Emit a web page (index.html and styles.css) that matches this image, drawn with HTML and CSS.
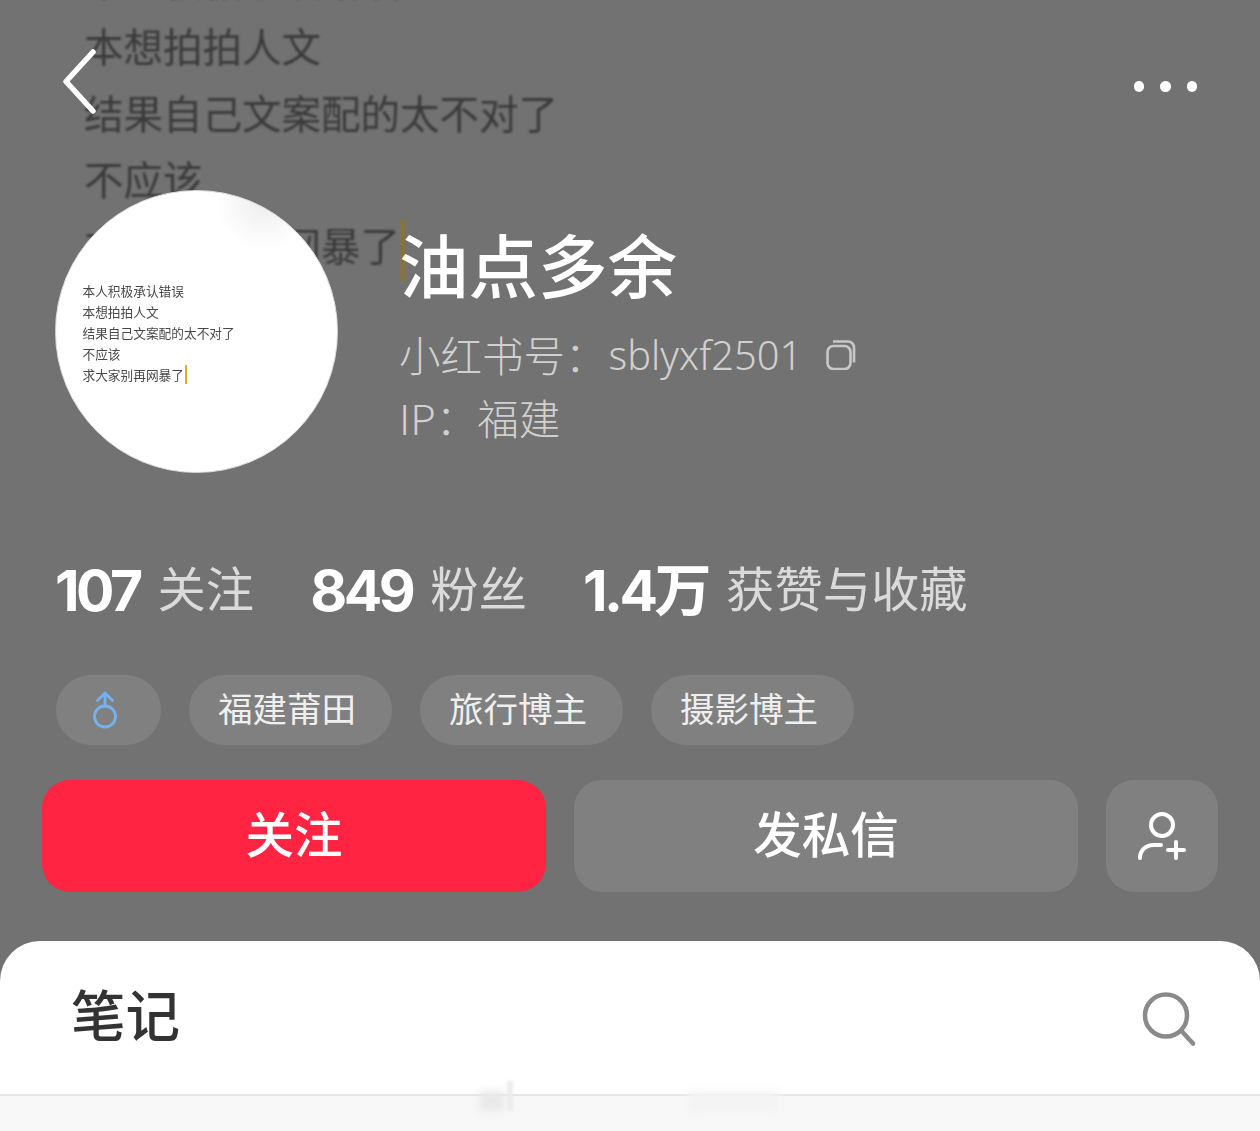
FILE: index.html
```html
<!DOCTYPE html>
<html lang="zh-cmn-Hans">
<head>
    <meta charset="UTF-8">
    <meta name="viewport" content="width=device-width, initial-scale=1.0">
    <title>油点多余</title>
    <link rel="stylesheet" href="styles.css">
</head>
<body>
<div class="page">
    <!-- 背景图：头像放大后的文字 -->
    <div class="backdrop">
        <p>本人积极承认错误</p>
        <p>本想拍拍人文</p>
        <p>结果自己文案配的太不对了</p>
        <p>不应该</p>
        <p>求大家别再网暴了<i class="caret"></i></p>
    </div>

    <div class="top">
        <svg class="back" width="36" height="66" viewBox="0 0 36 66"><path d="M31 3 L4 32.500 L31 62" fill="none" stroke="#fff" stroke-width="5.500" stroke-linecap="round" stroke-linejoin="round"/></svg>
        <div class="dots"><span></span><span></span><span></span></div>
    </div>

    <div class="profile">
        <div class="avatar">
            <p>本人积极承认错误</p>
            <p>本想拍拍人文</p>
            <p>结果自己文案配的太不对了</p>
            <p>不应该</p>
            <p>求大家别再网暴了<i class="caret"></i></p>
        </div>
        <div class="info">
            <h1>油点多余</h1>
            <div class="line">小红书号：<span class="rid">sblyxf2501</span>
                <svg class="copy" width="30" height="30" viewBox="0 0 30 30" fill="none" stroke="#c8c8c8" stroke-width="2.600"><rect x="1.500" y="6" width="23" height="23" rx="6"/><path d="M7 1.500h15a6 6 0 0 1 6 6v15"/></svg>
            </div>
            <div class="line">IP：<span class="place">福建</span></div>
        </div>
    </div>

    <div class="stats">
        <div class="stat"><b>107</b><span>关注</span></div>
        <div class="stat"><b>849</b><span>粉丝</span></div>
        <div class="stat"><b>1.4万</b><span>获赞与收藏</span></div>
    </div>

    <div class="tags">
        <div class="tag tag-sex">
            <svg width="26" height="38" viewBox="0 0 26 38" fill="none" stroke="#74b2ee" stroke-width="2.800" stroke-linecap="round" stroke-linejoin="round"><circle cx="13" cy="25.500" r="10.500"/><path d="M13 15V2M5.500 9.500 13 2l7.500 7.500"/></svg>
        </div>
        <div class="tag">福建莆田</div>
        <div class="tag">旅行博主</div>
        <div class="tag">摄影博主</div>
    </div>

    <div class="actions">
        <div class="btn btn-follow">关注</div>
        <div class="btn btn-msg">发私信</div>
        <div class="btn btn-add">
            <svg width="50" height="50" viewBox="0 0 50 50" fill="none" stroke="#fff" stroke-width="4" stroke-linecap="round"><circle cx="25" cy="14" r="11"/><path d="M3 47c0-8 6-13 14-13h7M31 39h16M39 31v16"/></svg>
        </div>
    </div>

    <div class="sheet">
        <div class="sheet-head">
            <h2>笔记</h2>
            <svg width="56" height="60" viewBox="0 0 56 60" fill="none" stroke="#8a8a8a" stroke-width="4.500" stroke-linecap="round"><circle cx="24" cy="29.500" r="21"/><path d="M40 45.500l11 12"/></svg>
        </div>
        <div class="sheet-bottom"></div>
        <!-- 下面笔记图片露出来的一点 -->
        <i class="smudge smudge-left"></i>
        <i class="smudge smudge-bar"></i>
        <i class="smudge smudge-right"></i>
    </div>
</div>
</body>
</html>
```

FILE: styles.css
```css
*{
    margin:0;
    padding:0;
    box-sizing:border-box;
}
body{
    font-family:"Noto Sans CJK SC","Noto Sans",sans-serif;
}
.page{
    position:relative;
    width:1260px;
    height:1131px;
    overflow:hidden;
    background:#727272;
    color:#fff;
    display:flex;
    flex-direction:column;
}

/* 背景 */
.backdrop{
    position:absolute;
    left:84px;
    top:-54px;
    font-size:39.500px;
    line-height:66.300px;
    color:#3a3a3a;
    filter:blur(1.200px);
    white-space:nowrap;
}
.backdrop p{
    height:66.300px;
}
.backdrop .caret{
    height:62px;
    width:4px;
    margin-left:1px;
    background:#8c7430;
    vertical-align:-20px;
}
.caret{
    display:inline-block;
}

/* 顶部 */
.top{
    position:relative;
    height:190px;
    flex:none;
    display:flex;
    justify-content:space-between;
    align-items:flex-start;
    padding:49px 63px 0 62px;
}
.dots{
    display:flex;
    gap:16px;
    margin-top:32px;
}
.dots span{
    width:10.500px;
    height:10.500px;
    border-radius:50%;
    background:#fff;
}

/* 头像和名字 */
.profile{
    position:relative;
    height:283px;
    flex:none;
    display:flex;
    padding-left:55px;
}
.avatar{
    width:283px;
    height:283px;
    flex:none;
    border-radius:50%;
    background:radial-gradient(circle at 74% 4%,#eeeeee 0,#fff 14%);
    border:1.500px solid #dcdcdc;
    color:#484848;
    font-size:12.700px;
    line-height:21px;
    padding:89px 0 0 26.500px;
    white-space:nowrap;
}
.avatar p{
    height:21px;
    filter:blur(.3px);
}
.avatar .caret{
    width:2px;
    height:19px;
    margin-left:1px;
    background:#e2a92c;
    vertical-align:-4px;
}
.info{
    margin-left:61px;
    padding-top:32px;
}
.info h1{
    font-size:69.500px;
    line-height:82px;
    font-weight:500;
    white-space:nowrap;
    margin-bottom:19px;
}
.line{
    display:flex;
    align-items:center;
    font-size:41.500px;
    line-height:63px;
    color:#d0d0d0;
    font-weight:300;
    white-space:nowrap;
}
.rid{
    font-family:"Noto Sans",sans-serif;
    font-size:39.800px;
    font-weight:300;
    margin-left:2px;
}
.copy{
    margin-left:24px;
}

/* 数据 */
.stats{
    position:relative;
    flex:none;
    height:202px;
    display:flex;
    gap:56px;
    padding:76px 0 0 55px;
}
.stat{
    height:74px;
    font-size:48.300px;
    line-height:74px;
    white-space:nowrap;
}
.stat b{
    font-family:Inter,"Noto Sans CJK SC",sans-serif;
    font-size:57px;
    font-weight:700;
    letter-spacing:-3.500px;
}
.stat span{
    font-weight:400;
    color:#dadada;
    margin-left:18px;
    vertical-align:4px;
}

/* 标签 */
.tags{
    position:relative;
    flex:none;
    display:flex;
    gap:28px;
    padding-left:56px;
}
.tag{
    width:203px;
    height:70px;
    border-radius:35px;
    background:#808080;
    font-size:34.500px;
    line-height:64px;
    text-align:center;
    color:#efefef;
    padding-right:7px;
}
.tag-sex{
    width:105px;
    display:flex;
    align-items:center;
    justify-content:center;
}

/* 按钮 */
.actions{
    position:relative;
    flex:none;
    display:flex;
    gap:28px;
    padding-left:42px;
    margin-top:35px;
}
.btn{
    width:504px;
    height:112px;
    border-radius:28px;
    font-size:48.500px;
    font-weight:500;
    line-height:105px;
    text-align:center;
    background:#808080;
}
.btn-follow{
    background:#ff2442;
}
.btn-add{
    width:112px;
    display:flex;
    align-items:center;
    justify-content:center;
}

/* 底部 */
.sheet{
    position:relative;
    flex:none;
    margin-top:49px;
    height:190px;
    background:#fff;
    border-radius:40px 40px 0 0;
    color:#333;
}
.sheet-head{
    height:155px;
    display:flex;
    justify-content:space-between;
    align-items:center;
    padding:0 62px 4px 71px;
    border-bottom:2px solid #e6e6e6;
}
.sheet-head h2{
    font-size:54.500px;
    font-weight:500;
    line-height:70px;
    padding-bottom:5px;
}
.sheet-bottom{
    height:35px;
    background:#f8f8f8;
}
.smudge{
    position:absolute;
    filter:blur(4px);
}
.smudge-left{
    left:480px;
    top:150px;
    width:24px;
    height:20px;
    background:#e8e8e8;
}
.smudge-bar{
    left:507px;
    top:140px;
    width:6px;
    height:30px;
    background:#ececec;
    filter:blur(1.500px);
}
.smudge-right{
    left:688px;
    top:150px;
    width:90px;
    height:22px;
    background:#f3f3f3;
}
```
